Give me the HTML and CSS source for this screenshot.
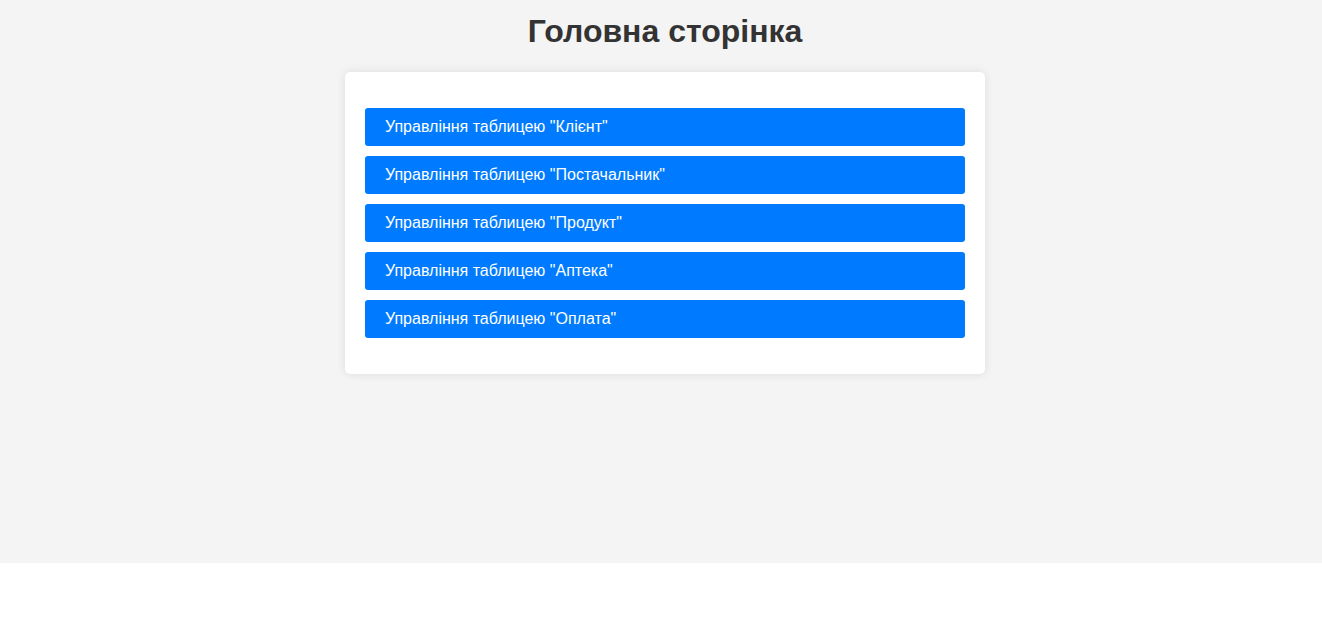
FILE: index.html
```html
<!DOCTYPE html>
<html lang="uk">
<head>
<meta charset="utf-8">
<title>Головна сторінка</title>
<link rel="stylesheet" href="styles.css">
</head>
<body>
<div class="page">
  <h1 class="title">Головна сторінка</h1>
  <div class="card">
    <ul class="menu">
      <li><a class="btn" href="#">Управління таблицею "Клієнт"</a></li>
      <li><a class="btn" href="#">Управління таблицею "Постачальник"</a></li>
      <li><a class="btn" href="#">Управління таблицею "Продукт"</a></li>
      <li><a class="btn" href="#">Управління таблицею "Аптека"</a></li>
      <li><a class="btn" href="#">Управління таблицею "Оплата"</a></li>
    </ul>
  </div>
</div>
</body>
</html>
```

FILE: styles.css
```css
html, body {
  margin: 0;
  padding: 0;
  background: #ffffff;
}
body {
  font-family: "Liberation Sans", Arial, sans-serif;
}
.page {
  background: #f4f4f4;
  height: 563px;
  box-sizing: border-box;
  padding-top: 13px;
  padding-left: 8px;
  display: flex;
  flex-direction: column;
  align-items: center;
}
.title {
  margin: 0 0 22px;
  font-size: 32px;
  font-weight: bold;
  color: #333333;
  text-align: center;
}
.card {
  width: 640px;
  box-sizing: border-box;
  background: #ffffff;
  border-radius: 5px;
  box-shadow: 0 0 10px rgba(0, 0, 0, 0.1);
  padding: 20px;
}
.menu {
  list-style: none;
  margin: 16px 0;
  padding: 0;
  display: flex;
  flex-direction: column;
  gap: 10px;
}
.btn {
  display: block;
  background: #007bff;
  color: #ffffff;
  text-decoration: none;
  font-size: 16px;
  line-height: 18px;
  padding: 10px 20px;
  border-radius: 3px;
}
```
